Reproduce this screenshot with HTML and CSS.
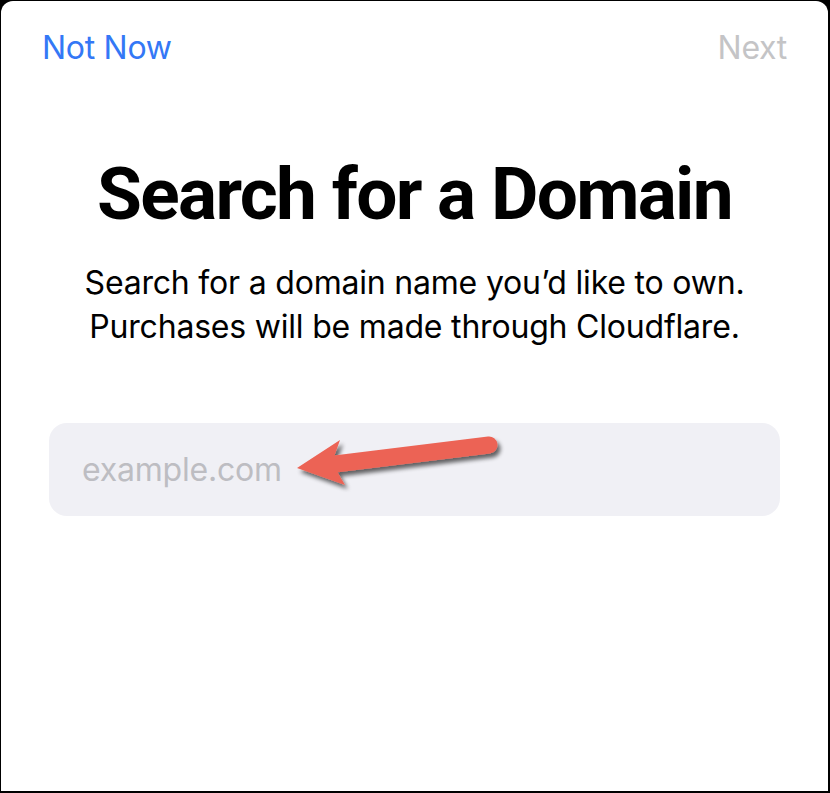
FILE: index.html
```html
<!DOCTYPE html>
<html lang="en">
<head>
<meta charset="utf-8">
<link rel="stylesheet" href="styles.css">
<title>Search for a Domain</title>
</head>
<body>
<div class="frame">
  <div class="sheet">
    <nav class="navbar">
      <span class="nav-btn nav-left">Not Now</span>
      <span class="nav-btn nav-right">Next</span>
    </nav>
    <h1 class="title">Search for a Domain</h1>
    <p class="subtitle">Search for a domain name you’d like to own.<br>Purchases will be made through Cloudflare.</p>
    <div class="field">
      <span class="placeholder">example.com</span>
      <svg class="arrow" width="230" height="80" viewBox="0 0 230 80" aria-hidden="true">
        <defs>
          <filter id="sh" x="-20%" y="-30%" width="140%" height="170%">
            <feGaussianBlur in="SourceAlpha" stdDeviation="2.2"/>
            <feOffset dx="3" dy="4" result="b"/>
            <feComponentTransfer><feFuncA type="linear" slope="0.6"/></feComponentTransfer>
            <feMerge><feMergeNode/><feMergeNode in="SourceGraphic"/></feMerge>
          </filter>
        </defs>
        <g filter="url(#sh)" fill="#EC6455">
          <line x1="52" y1="51" x2="206" y2="32" stroke="#EC6455" stroke-width="17" stroke-linecap="round"/>
          <polygon points="14,55 57,27 51,44 55,60 62,72"/>
        </g>
      </svg>
    </div>
  </div>
</div>
</body>
</html>
```
FILE: styles.css
```css
* { box-sizing: border-box; }
html, body {
  margin: 0;
  padding: 0;
  width: 830px;
  height: 793px;
  background: #000;
  overflow: hidden;
}
body {
  font-family: Inter, "Noto Sans", "Liberation Sans", sans-serif;
}
.frame {
  width: 830px;
  height: 793px;
  padding: 1px 2px 2px 1px;
  background: #000;
}
.sheet {
  width: 827px;
  height: 790px;
  background: #fff;
  border-radius: 12px 12px 0 0;
  padding: 0 41px 0 41px;
  display: flex;
  flex-direction: column;
  align-items: center;
}
.navbar {
  width: 100%;
  display: flex;
  justify-content: space-between;
  align-items: center;
  height: 94px;
  padding-bottom: 1px;
}
.nav-btn {
  font-size: 32px;
  letter-spacing: -0.3px;
}
.nav-left { color: #3478F6; }
.nav-right { color: #C4C4C6; }
.title {
  margin: 56px 0 0 0;
  font-family: Roboto, Inter, sans-serif;
  font-size: 73px;
  font-weight: 700;
  line-height: 86px;
  letter-spacing: -1.7px;
  color: #000;
  text-align: center;
}
.subtitle {
  margin: 24px 0 0 0;
  font-size: 32px;
  line-height: 44px;
  letter-spacing: -0.2px;
  text-align: center;
  color: #000;
}
.field {
  position: relative;
  margin-top: 74px;
  width: 731px;
  height: 93px;
  border-radius: 18px;
  background: #F0F0F5;
  display: flex;
  align-items: center;
  padding-left: 33px;
}
.placeholder {
  font-size: 32px;
  color: #BDBDC2;
  letter-spacing: -0.2px;
}
.arrow {
  position: absolute;
  left: 234px;
  top: -10px;
}
```
